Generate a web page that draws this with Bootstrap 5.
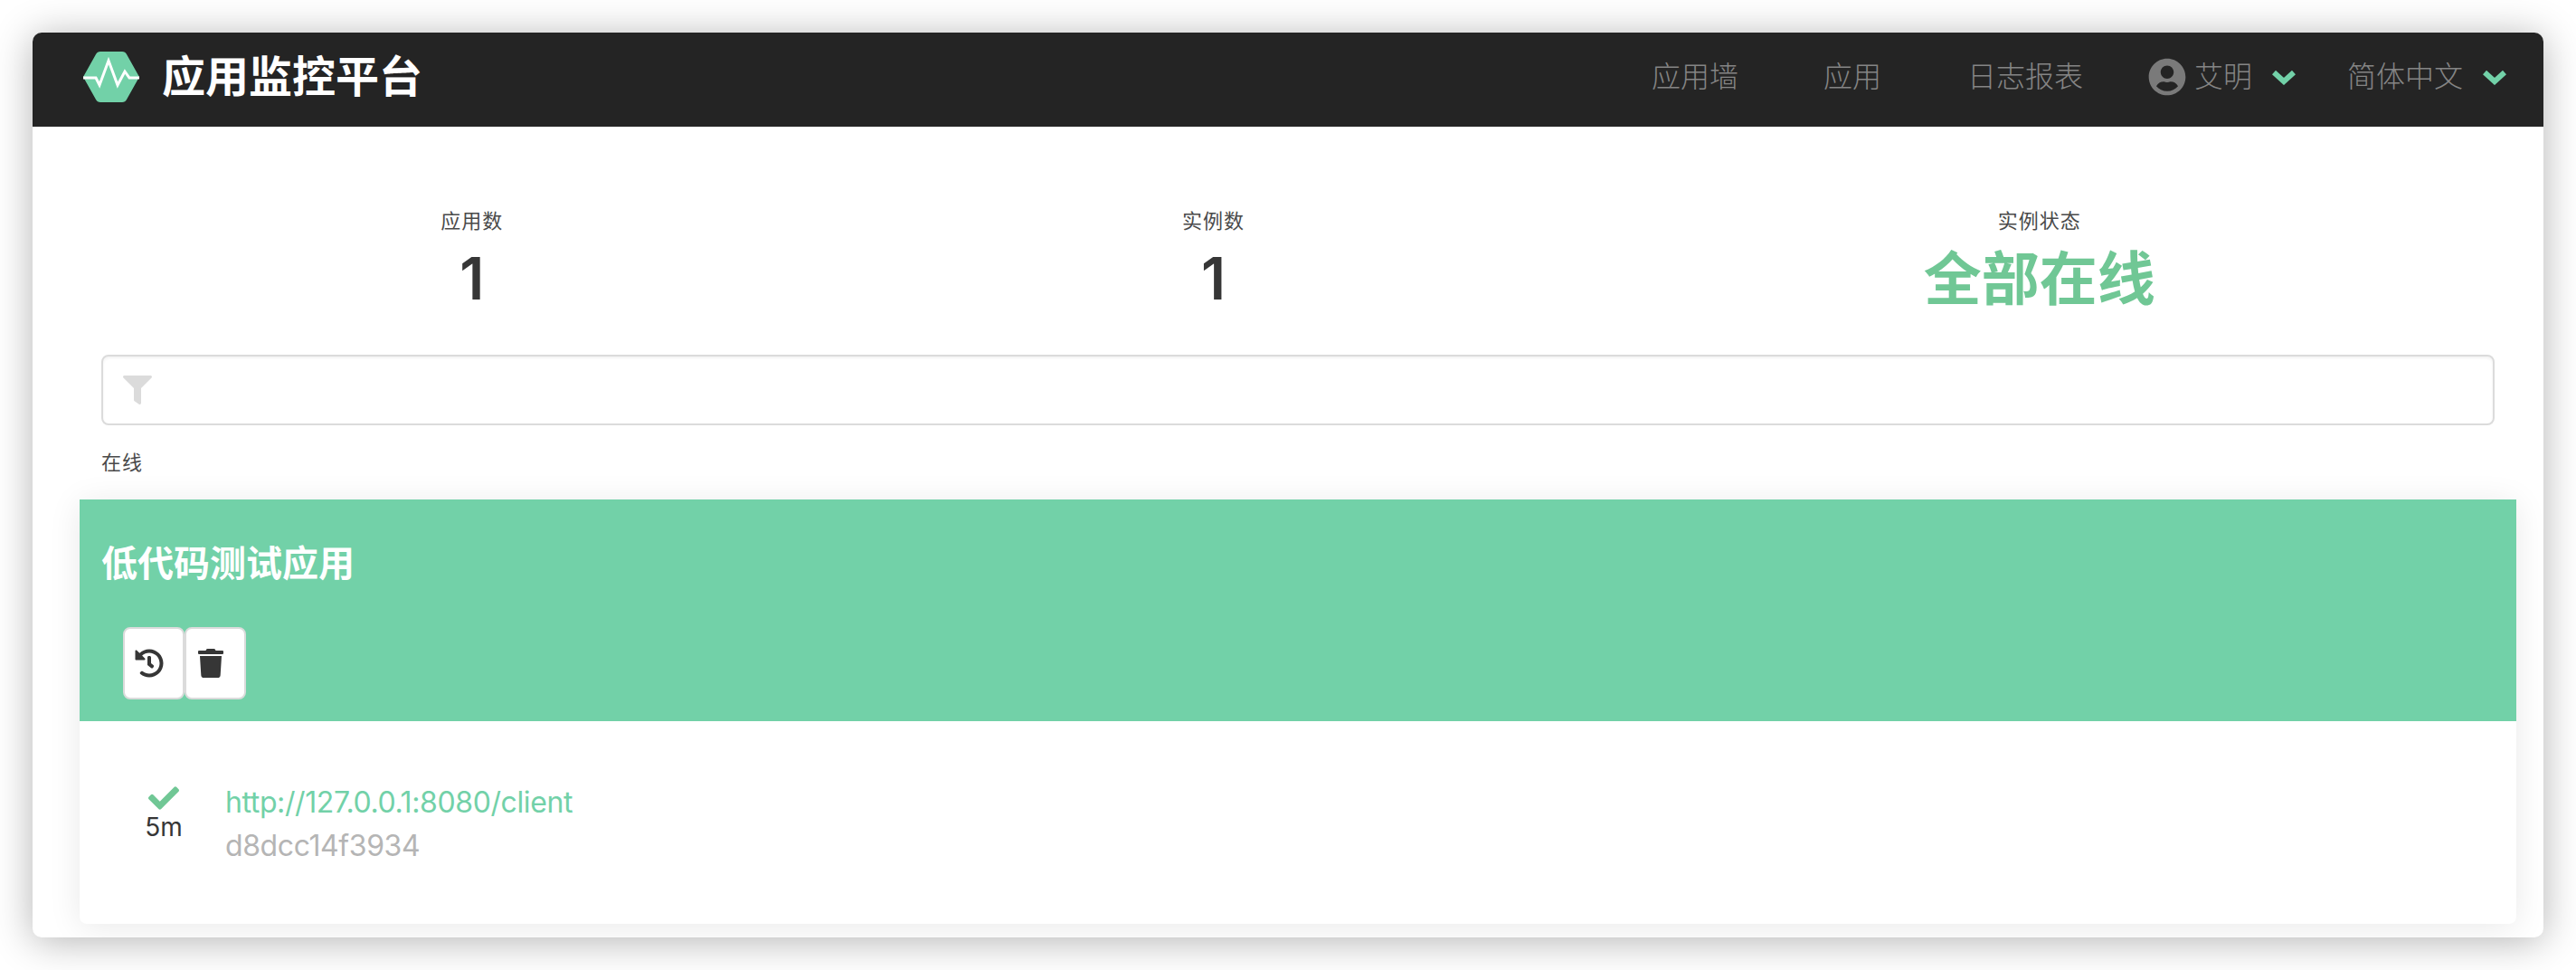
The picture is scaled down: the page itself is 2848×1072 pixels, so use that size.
<!DOCTYPE html>
<html lang="zh-CN">
<head>
<meta charset="utf-8">
<title>应用监控平台</title>
<link href="https://cdn.jsdelivr.net/npm/bootstrap@5.3.0/dist/css/bootstrap.min.css" rel="stylesheet">
<style>
html,body{height:100%;}
body{margin:0;padding:36px;background:#fff;overflow:hidden;color:#363636;font-family:Inter,"Noto Sans CJK SC",sans-serif;}
.app-window{height:1000px;background:#fff;border-radius:10px;overflow:hidden;box-shadow:0 4px 44px rgba(0,0,0,.3);}
.app-bar{height:104px;background:#242424;padding:0 41px 6px 55px;flex-wrap:nowrap;}
.app-brand{display:flex;align-items:center;gap:24px;padding:0;margin:0;color:#fff;font-size:48px;font-weight:600;line-height:1;}
.app-brand:hover{color:#fff;}
.app-links{flex-direction:row;align-items:center;}
.app-link{color:#858585;font-size:32px;font-weight:300;line-height:48px;padding:0;}
.link-a{margin-right:94px;}
.link-b{margin-right:95px;}
.link-c{margin-right:72px;}
.link-user{margin-right:57px;}
.avatar-ic{width:42px;height:42px;margin-right:9px;fill:#7a7a7a;}
.chev-ic{width:26px;height:17px;margin-left:22px;fill:none;stroke:#72d1a8;stroke-width:6;}
.page-wrap{margin:0 30px 0 52px;}
.stat-row{padding:88px 24px 0;}
.stat-cell{flex:1 1 auto;text-align:center;}
.stat-label{font-size:22px;line-height:32px;letter-spacing:1px;color:#4a4a4a;}
.stat-value{font-size:64px;line-height:96px;font-weight:600;color:#363636;}
.stat-ok{color:#70c795;font-weight:700;}
.filter-area{padding:36px 24px 0;}
.filter-box{height:78px;border:2px solid #dbdbdb;border-radius:8px;padding-left:22px;box-shadow:inset 0 2px 3px rgba(10,10,10,.05);}
.filter-ic{width:32px;height:32px;fill:#dbdbdb;}
.status-label{font-size:22px;line-height:33px;letter-spacing:1px;color:#4a4a4a;margin-top:25px;margin-bottom:24px;}
.app-card{border:0;border-radius:0 0 8px 8px;height:469px;box-shadow:0 4px 36px rgba(10,10,10,.09);}
.app-head{background:#72d1a8;height:245px;padding:41px 24px 0;}
.app-name{color:#fff;font-size:40px;font-weight:600;line-height:60px;}
.head-tools{margin:40px 0 0 24px;}
.tool-btn{width:68px;height:80px;padding:0 10px 0 0;background:#fff;border:2px solid #dbdbdb;border-radius:8px;display:flex;align-items:center;justify-content:center;}
.tool-btn:hover{background:#fff;border-color:#dbdbdb;}
.tool-ic{height:32px;width:32px;fill:#363636;}
.inst-row{padding:0 0 0 60px;gap:35px;}
.inst-state{width:66px;margin-top:68px;text-align:center;font-size:28px;line-height:36px;color:#363636;}
.check-ic{width:34px;height:34px;fill:#70c795;display:block;margin:0 auto -3px;}
.inst-main{margin-top:66px;font-size:32px;line-height:48px;letter-spacing:-.4px;}
.inst-url{color:#72d1a8;text-decoration:none;display:block;}
.inst-id{color:#b5b5b5;}
</style>
</head>
<body>
<div class="app-window d-flex flex-column">
  <nav class="navbar app-bar">
    <a class="navbar-brand app-brand" href="#">
      <svg width="64" height="56" viewBox="0 0 64 56" aria-hidden="true">
        <path d="M1 28 15 3Q16.500 0 20 0H44Q47.500 0 49 3L63 28 49 53Q47.500 56 44 56H20Q16.500 56 15 53Z" fill="#72d1a8"/>
        <path d="M1 29H15L19 37 29 10 39 37 47 22 52 29H63" fill="none" stroke="#fff" stroke-width="3"/>
      </svg>
      <span>应用监控平台</span>
    </a>
    <div class="navbar-nav app-links">
      <a class="nav-link app-link link-a" href="#">应用墙</a>
      <a class="nav-link app-link link-b" href="#">应用</a>
      <a class="nav-link app-link link-c" href="#">日志报表</a>
      <a class="nav-link app-link link-user d-flex align-items-center" href="#">
        <svg class="avatar-ic" viewBox="0 0 496 512" aria-hidden="true"><path d="M248 8C111 8 0 119 0 256s111 248 248 248 248-111 248-248S385 8 248 8zm0 96c48.600 0 88 39.400 88 88s-39.400 88-88 88-88-39.400-88-88 39.400-88 88-88zm0 344c-58.700 0-111.300-26.600-146.500-68.200 18.800-35.400 55.600-59.800 98.500-59.800 2.400 0 4.800.4 7.100 1.100 13 4.200 26.600 6.900 40.900 6.900 14.300 0 28-2.700 40.900-6.900 2.300-.7 4.700-1.100 7.100-1.100 42.900 0 79.700 24.400 98.500 59.800C359.300 421.400 306.700 448 248 448z"/></svg>
        <span>艾明</span>
        <svg class="chev-ic" viewBox="0 0 26 17" aria-hidden="true"><path d="M2 3 13 13 24 3"/></svg>
      </a>
      <a class="nav-link app-link d-flex align-items-center" href="#">
        <span>简体中文</span>
        <svg class="chev-ic" viewBox="0 0 26 17" aria-hidden="true"><path d="M2 3 13 13 24 3"/></svg>
      </a>
    </div>
  </nav>
  <main class="page-wrap">
    <div class="stat-row d-flex">
      <div class="stat-cell"><div class="stat-label">应用数</div><div class="stat-value">1</div></div>
      <div class="stat-cell"><div class="stat-label">实例数</div><div class="stat-value">1</div></div>
      <div class="stat-cell"><div class="stat-label">实例状态</div><div class="stat-value stat-ok">全部在线</div></div>
    </div>
    <div class="filter-area">
      <div class="filter-box d-flex align-items-center">
        <svg class="filter-ic" viewBox="0 0 512 512" aria-hidden="true"><path d="M487.976 0H24.028C2.710 0-8.047 25.866 7.058 40.971L192 225.941V432c0 7.831 3.821 15.170 10.237 19.662l80 55.980C298.020 518.690 320 507.493 320 487.980V225.941l184.947-184.970C520.021 25.896 509.338 0 487.976 0z"/></svg>
      </div>
      <div class="status-label">在线</div>
    </div>
    <section class="card app-card">
      <div class="app-head">
        <div class="app-name">低代码测试应用</div>
        <div class="head-tools d-flex">
          <button type="button" class="btn tool-btn" aria-label="历史">
            <svg class="tool-ic" viewBox="0 0 512 512" aria-hidden="true"><path d="M504 255.531c.253 136.640-111.180 248.372-247.820 248.468-59.015.042-113.223-20.530-155.822-54.911-11.077-8.940-11.905-25.541-1.839-35.607l11.267-11.267c8.609-8.609 22.353-9.551 31.891-1.984C173.062 425.135 212.781 440 256 440c101.705 0 184-82.311 184-184 0-101.705-82.311-184-184-184-48.814 0-93.149 18.969-126.068 49.932l50.754 50.754c10.080 10.080 2.941 27.314-11.313 27.314H24c-8.837 0-16-7.163-16-16V38.627c0-14.254 17.234-21.393 27.314-11.314l49.372 49.372C129.209 34.136 189.552 8 256 8c136.810 0 247.747 110.780 248 247.531zm-180.912 78.784l9.823-12.630c8.138-10.463 6.253-25.542-4.210-33.679L288 256.349V152c0-13.255-10.745-24-24-24h-16c-13.255 0-24 10.745-24 24v135.651l65.409 50.874c10.463 8.137 25.541 6.253 33.679-4.210z"/></svg>
          </button>
          <button type="button" class="btn tool-btn" aria-label="删除">
            <svg class="tool-ic" viewBox="0 0 448 512" aria-hidden="true"><path d="M432 32H312l-9.400-18.700A24 24 0 0 0 281.100 0H166.800a23.720 23.720 0 0 0-21.400 13.300L136 32H16A16 16 0 0 0 0 48v32a16 16 0 0 0 16 16h416a16 16 0 0 0 16-16V48a16 16 0 0 0-16-16zM53.200 467a48 48 0 0 0 47.900 45h245.800a48 48 0 0 0 47.900-45L416 128H32z"/></svg>
          </button>
        </div>
      </div>
      <div class="inst-row d-flex align-items-start">
        <div class="inst-state">
          <svg class="check-ic" viewBox="0 0 512 512" aria-hidden="true"><path d="M173.898 439.404l-166.400-166.400c-9.997-9.997-9.997-26.206 0-36.204l36.203-36.204c9.997-9.998 26.207-9.998 36.204 0L192 312.690 432.095 72.596c9.997-9.997 26.207-9.997 36.204 0l36.203 36.204c9.997 9.997 9.997 26.206 0 36.204l-294.400 294.401c-9.998 9.997-26.207 9.997-36.204-.001z"/></svg>
          5m
        </div>
        <div class="inst-main">
          <a class="inst-url" href="#">http://127.0.0.1:8080/client</a>
          <div class="inst-id">d8dcc14f3934</div>
        </div>
      </div>
    </section>
  </main>
</div>
<script src="https://cdn.jsdelivr.net/npm/bootstrap@5.3.0/dist/js/bootstrap.bundle.min.js"></script>
</body>
</html>
